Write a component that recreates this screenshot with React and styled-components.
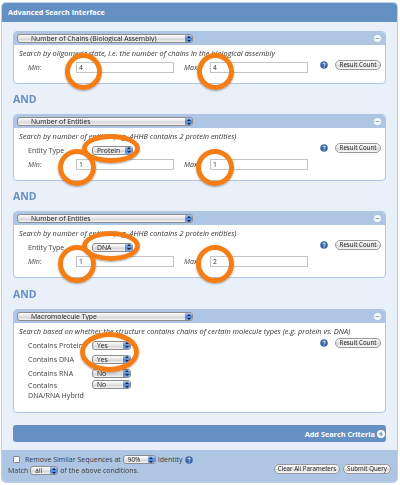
import React from "react";
import styled, { createGlobalStyle } from "styled-components";

const Global = createGlobalStyle`
  html, body { margin: 0; padding: 0; background: #fff; }
  #root { width: 400px; height: 485px; overflow: hidden; }
`;

const Stage = styled.div`
  position: relative;
  width: 400px;
  height: 485px;
  padding: 3px 3px 0 2px;
  box-sizing: border-box;
  font-family: "Open Sans", sans-serif;
  color: #333;
  filter: blur(0.35px);
`;

const Panel = styled.div`
  height: 479px;
  border-radius: 4px;
  overflow: hidden;
  display: flex;
  flex-direction: column;
  background: #e9f0f9;
  box-shadow: 0 0 0 1px #bcd0e8;
`;

const PanelHeader = styled.div`
  height: 19px;
  flex: none;
  background: #6590c3;
  color: #fff;
  font-weight: bold;
  font-size: 7.25px;
  line-height: 19px;
  padding-left: 6px;
`;

const PanelBody = styled.div`
  flex: 1;
  padding: 9px 11px 0 11px;
  display: flex;
  flex-direction: column;
`;

const Card = styled.section`
  height: ${(p) => p.$h}px;
  flex: none;
  box-sizing: border-box;
  background: #fff;
  border: 1px solid #aec6e3;
  border-radius: 4px;
  overflow: hidden;
`;

const CardHead = styled.div`
  height: 13px;
  background: #aec6e3;
  display: flex;
  align-items: center;
  justify-content: space-between;
  padding: 0 4px 0 3px;
`;

const SelectBox = styled.div`
  position: relative;
  width: ${(p) => p.$w}px;
  height: 9px;
  box-sizing: border-box;
  flex: none;
  border: 1px solid #8c8c8c;
  border-radius: 3px;
  background: linear-gradient(#fff, #e2e2e2 50%, #cfcfcf 55%, #f6f6f6);
  font-size: ${(p) => p.$fs || 6.8}px;
  line-height: 7px;
  padding-left: ${(p) => p.$pl || 4}px;
  color: #222;
  white-space: nowrap;
  overflow: hidden;
`;

const Stepper = styled.span`
  position: absolute;
  top: 0;
  right: 0;
  bottom: 0;
  width: 7px;
  background: linear-gradient(#a9c6ee, #4f86d6 55%, #7aa8e6);
  &::before, &::after {
    content: "";
    position: absolute;
    left: 1.5px;
    border-left: 2px solid transparent;
    border-right: 2px solid transparent;
  }
  &::before { top: 0.5px; border-bottom: 2.5px solid #16294a; }
  &::after { bottom: 0.5px; border-top: 2.5px solid #16294a; }
`;

const Select = ({ w, fs, pl, children }) => (
  <SelectBox $w={w} $fs={fs} $pl={pl}>
    {children}
    <Stepper />
  </SelectBox>
);

const MinusIcon = () => (
  <svg width="7" height="7" viewBox="0 0 7 7">
    <circle cx="3.5" cy="3.5" r="3.5" fill="#fff" fillOpacity="0.9" />
    <rect x="1.4" y="3" width="4.2" height="1" fill="#8aa9cf" />
  </svg>
);

const HelpIcon = () => (
  <svg width="8" height="8" viewBox="0 0 8 8">
    <circle cx="4" cy="4" r="3.8" fill="#3a68a6" />
    <path d="M2.9 3.1C3 2.3 3.5 2 4.1 2 4.8 2 5.3 2.4 5.3 3 5.3 3.7 4.2 3.8 4.1 4.8" fill="none" stroke="#fff" strokeWidth="0.9" />
    <circle cx="4.1" cy="6" r="0.55" fill="#fff" />
  </svg>
);

const PlusIcon = () => (
  <svg width="8" height="8" viewBox="0 0 8 8">
    <circle cx="4" cy="4" r="4" fill="#fff" />
    <path d="M4 1.8V6.2M1.8 4H6.2" stroke="#6590c3" strokeWidth="1.2" />
  </svg>
);

const CardBody = styled.div`
  display: grid;
  grid-template-columns: 1fr 61px;
  padding: 1px 4px 0 5px;
`;

const Description = styled.p`
  grid-column: 1 / -1;
  margin: 0;
  height: 14px;
  font-size: 7.4px;
  line-height: 14px;
  font-style: italic;
  color: #333;
  white-space: nowrap;
`;

const Fields = styled.div`
  display: flex;
  flex-direction: column;
  padding-left: 9px;
`;

const Row = styled.div`
  height: ${(p) => p.$h || 14}px;
  display: flex;
  align-items: ${(p) => (p.$top ? "flex-start" : "center")};
`;

const Label = styled.span`
  width: ${(p) => p.$w}px;
  flex: none;
  font-size: 7.1px;
  color: #444;
  font-style: ${(p) => (p.$italic ? "italic" : "normal")};
  line-height: 10px;
`;

const MaxLabel = styled(Label)`
  width: 26px;
  padding-left: 10px;
`;

const TextInput = styled.div`
  width: 98px;
  height: 11px;
  box-sizing: border-box;
  border: 1px solid #c4c4c4;
  background: #fff;
  font-size: 6.8px;
  line-height: 9px;
  padding-left: 2px;
  color: #333;
`;

const Actions = styled.div`
  display: flex;
  align-items: center;
  justify-content: space-between;
  height: 11px;
  margin-top: -1px;
`;

const Pill = styled.button`
  height: 10px;
  width: ${(p) => p.$w}px;
  padding: 0;
  box-sizing: border-box;
  border: 1px solid #9a9a9a;
  border-radius: 6px;
  background: linear-gradient(#fff, #e6e6e6 50%, #d6d6d6 55%, #f8f8f8);
  font-family: inherit;
  font-size: 6.2px;
  line-height: 8px;
  color: #222;
  white-space: nowrap;
`;

const And = styled.h2`
  margin: 0;
  height: ${(p) => p.$h}px;
  box-sizing: border-box;
  padding-top: 1px;
  line-height: ${(p) => p.$h - 1}px;
  font-size: 10.5px;
  font-weight: bold;
  color: #6590c3;
`;

const AddBar = styled.div`
  margin-top: 12px;
  height: 17px;
  flex: none;
  border-radius: 3px;
  background: #6590c3;
  color: #fff;
  font-weight: bold;
  font-size: 7.3px;
  display: flex;
  align-items: center;
  justify-content: flex-end;
  gap: 2px;
  padding-right: 1px;
`;

const Footer = styled.footer`
  height: 32px;
  flex: none;
  background: #aec6e3;
  display: flex;
  justify-content: space-between;
  padding: 4px 6px 0 6px;
  box-sizing: border-box;
  font-size: 7px;
  color: #3a3a3a;
`;

const FooterLeft = styled.div`
  display: flex;
  flex-direction: column;
`;

const FooterRow = styled.div`
  height: 11px;
  display: flex;
  align-items: center;
  gap: 2px;
  white-space: nowrap;
`;

const Check = styled.span`
  width: 5px;
  height: 5px;
  margin: 0 3px 0 5px;
  border: 1px solid #888;
  border-radius: 1px;
  background: #fff;
`;

const FooterButtons = styled.div`
  display: flex;
  align-items: flex-start;
  gap: 3px;
  padding-top: 10px;
`;

const Ring = styled.span`
  position: absolute;
  left: ${(p) => p.$x}px;
  top: ${(p) => p.$y}px;
  width: ${(p) => p.$w}px;
  height: ${(p) => p.$h}px;
  box-sizing: border-box;
  border: 5px solid #f57d14;
  border-radius: 50%;
  box-shadow: 0 1px 2px rgba(0, 0, 0, 0.35);
  pointer-events: none;
`;

const rings = [
  [65, 53, 37, 37], [197, 53, 37, 37],
  [82, 134, 58, 29], [58, 149, 38, 37], [196, 149, 38, 37],
  [82, 231, 58, 30], [58, 245, 38, 38], [196, 245, 38, 38],
  [80, 332, 59, 40],
];

const Head = ({ title }) => (
  <CardHead>
    <Select w={176} pl={13}>{title}</Select>
    <MinusIcon />
  </CardHead>
);

const CountActions = () => (
  <Actions>
    <HelpIcon />
    <Pill $w={46}>Result Count</Pill>
  </Actions>
);

const RangeRow = ({ min, max }) => (
  <Row>
    <Label $w={48} $italic>Min:</Label>
    <TextInput>{min}</TextInput>
    <MaxLabel $italic>Max:</MaxLabel>
    <TextInput>{max}</TextInput>
  </Row>
);

const EntityCard = ({ type, min, max }) => (
  <Card $h={67}>
    <Head title="Number of Entities" />
    <CardBody>
      <Description>Search by number of entities (e.g. 4HHB contains 2 protein entities)</Description>
      <Fields>
        <Row>
          <Label $w={64}>Entity Type</Label>
          <Select w={41}>{type}</Select>
        </Row>
        <RangeRow min={min} max={max} />
      </Fields>
      <CountActions />
    </CardBody>
  </Card>
);

const YesNo = ({ label, value, h }) => (
  <Row $h={h} $top={Boolean(h)}>
    <Label $w={64}>{label}</Label>
    <Select w={39}>{value}</Select>
  </Row>
);

export default function App() {
  return (
    <Stage>
      <Global />
      <Panel>
        <PanelHeader>Advanced Search Interface</PanelHeader>
        <PanelBody>
          <Card $h={53}>
            <Head title="Number of Chains (Biological Assembly)" />
            <CardBody>
              <Description>Search by oligomeric state, i.e. the number of chains in the biological assembly</Description>
              <Fields>
                <RangeRow min="4" max="4" />
              </Fields>
              <CountActions />
            </CardBody>
          </Card>
          <And $h={30}>AND</And>
          <EntityCard type="Protein" min="1" max="1" />
          <And $h={30}>AND</And>
          <EntityCard type="DNA" min="1" max="2" />
          <And $h={31}>AND</And>
          <Card $h={104}>
            <Head title="Macromolecule Type" />
            <CardBody>
              <Description>Search based on whether the structure contains chains of certain molecule types (e.g. protein vs. DNA)</Description>
              <Fields>
                <YesNo label="Contains Protein" value="Yes" />
                <YesNo label="Contains DNA" value="Yes" />
                <YesNo label="Contains RNA" value="No" />
                <YesNo label={<>Contains<br />DNA/RNA Hybrid</>} value="No" h={26} />
              </Fields>
              <CountActions />
            </CardBody>
          </Card>
          <AddBar>Add Search Criteria <PlusIcon /></AddBar>
        </PanelBody>
        <Footer>
          <FooterLeft>
            <FooterRow>
              <Check />Remove Similar Sequences at
              <Select w={33} fs={6.4}>90%</Select>
              Identity
              <HelpIcon />
            </FooterRow>
            <FooterRow>
              Match
              <Select w={28} fs={6.4}>all</Select>
              of the above conditions.
            </FooterRow>
          </FooterLeft>
          <FooterButtons>
            <Pill $w={66}>Clear All Parameters</Pill>
            <Pill $w={48}>Submit Query</Pill>
          </FooterButtons>
        </Footer>
      </Panel>
      {rings.map(([x, y, w, h]) => (
        <Ring key={`${x}-${y}`} $x={x} $y={y} $w={w} $h={h} />
      ))}
    </Stage>
  );
}
